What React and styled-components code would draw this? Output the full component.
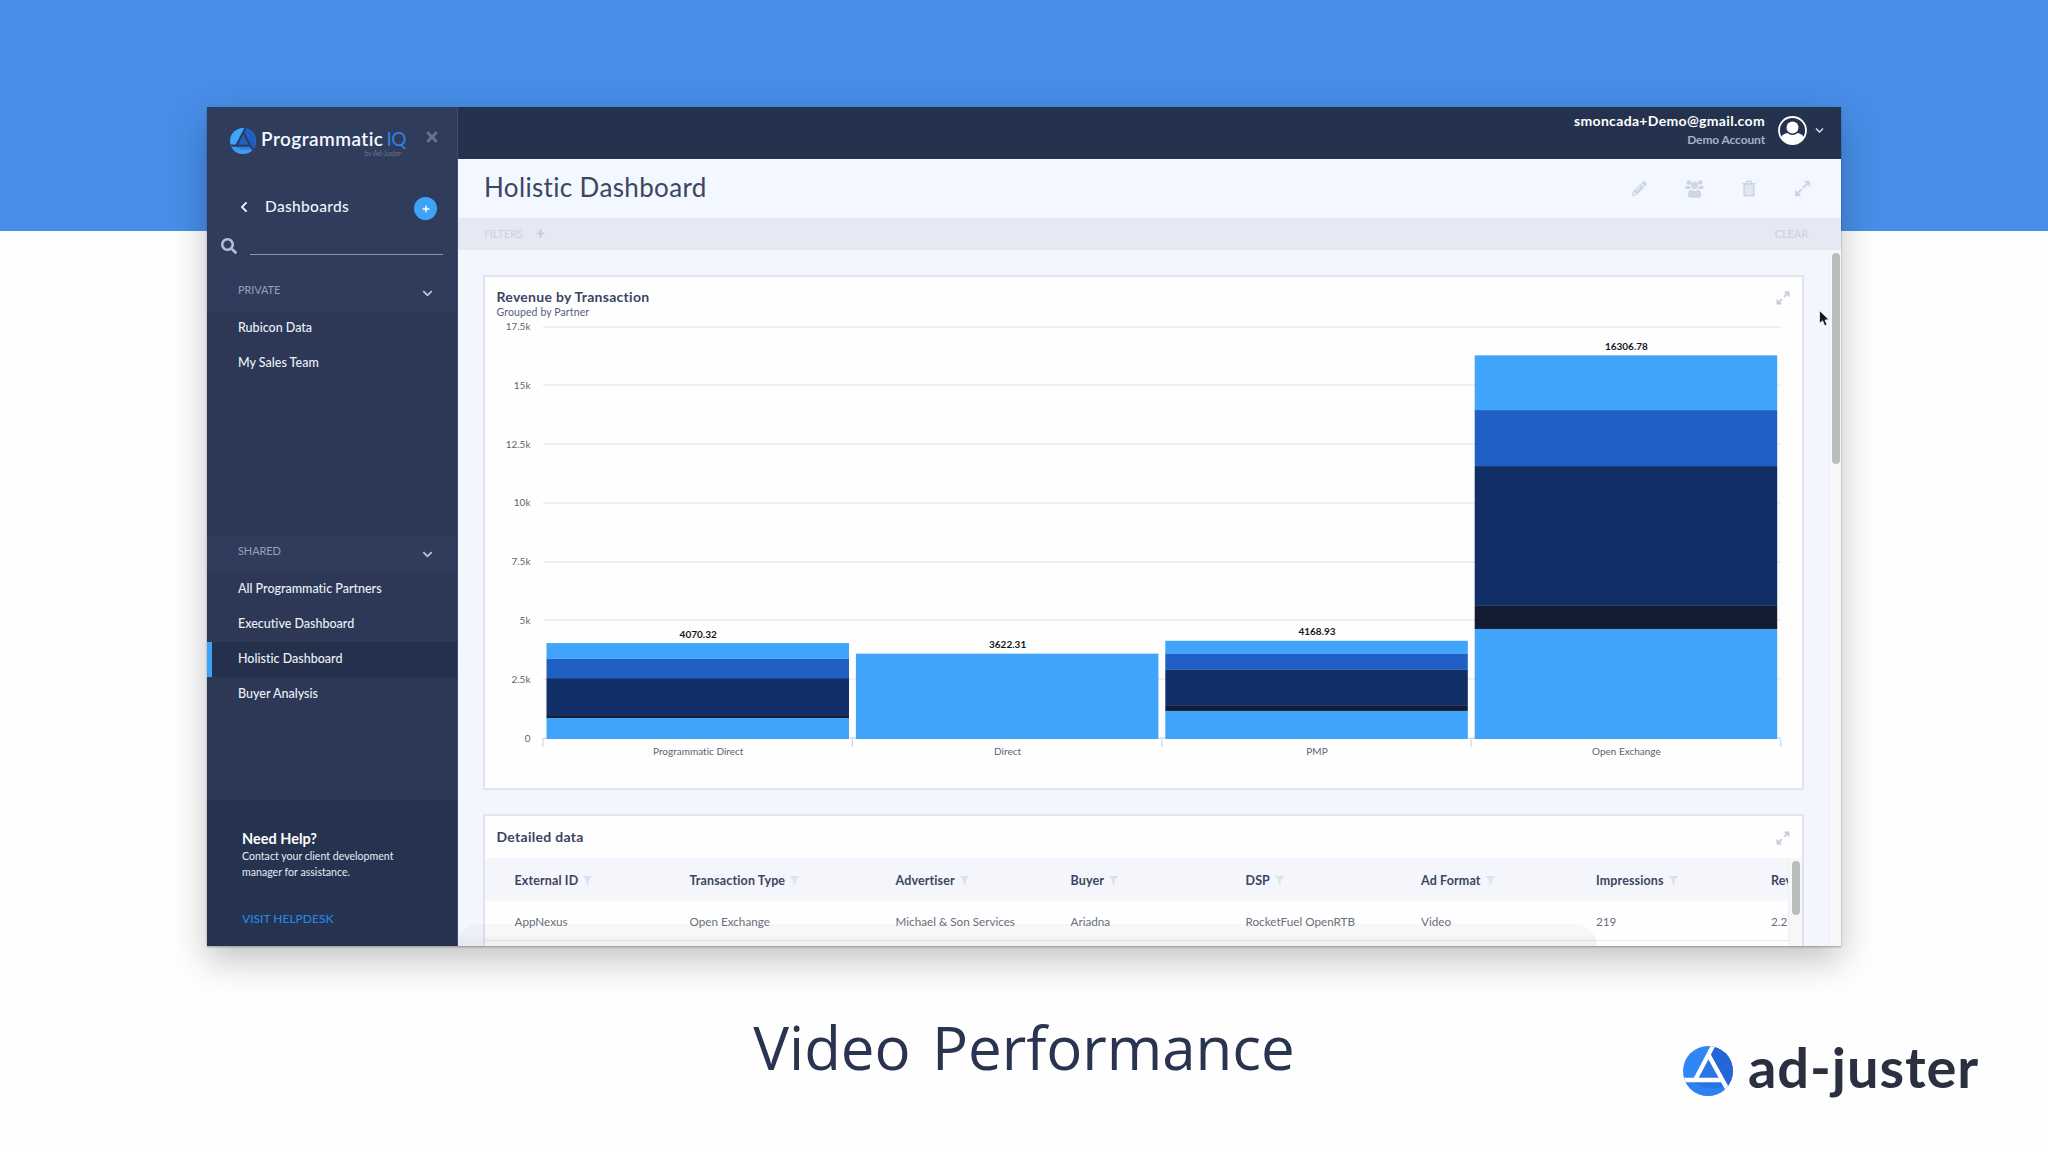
import React from 'react';
import styled, { createGlobalStyle } from 'styled-components';
import {
  FaTimes, FaChevronLeft, FaChevronDown, FaPlus, FaSearch, FaPencilAlt, FaFilter,
} from 'react-icons/fa';

const GlobalStyle = createGlobalStyle`
  * { box-sizing: border-box; }
  body { margin: 0; font-family: Lato, "Liberation Sans", sans-serif; font-variant-ligatures: none; }
  svg { display: block; flex: none; }
`;

/* ---------- page ---------- */

const Page = styled.div`
  display: flex;
  flex-direction: column;
  align-items: center;
  width: 2048px;
  height: 1152px;
  padding-top: 107px;
  overflow: hidden;
  background: linear-gradient(#478ee8 231px, #fefefe 231px);
`;

const Window = styled.div`
  position: relative;
  display: flex;
  width: 1634px;
  height: 839px;
  flex: none;
  background: #f4f6fe;
  box-shadow: 0 14px 34px rgba(0, 0, 0, 0.24), 0 1px 2px rgba(0, 0, 0, 0.3);
`;

const Footer = styled.footer`
  display: grid;
  grid-template-columns: 1fr auto 1fr;
  width: 100%;
  height: 206px;
  padding: 61px 69px 0;
`;

const Caption = styled.h1`
  grid-column: 2;
  margin: 0;
  font: 400 60px/80px "Open Sans", sans-serif;
  letter-spacing: -0.05px;
  word-spacing: 6px;
  color: #283450;
`;

const Company = styled.div`
  justify-self: end;
  display: flex;
  align-items: center;
  gap: 15px;
  height: 68px;
  margin-top: 30px;
`;

const CompanyName = styled.span`
  margin-top: -9px;
  font-size: 56px;
  font-weight: 700;
  line-height: 60px;
  letter-spacing: 0.9px;
  color: #2a3040;
`;

/* ---------- sidebar ---------- */

const Sidebar = styled.aside`
  display: flex;
  flex-direction: column;
  width: 251px;
  flex: none;
  background: #2f3c5b;
  border-right: 1px solid #46486f;
`;

const Brand = styled.div`
  display: flex;
  align-items: flex-start;
  height: 82px;
  padding: 21px 17px 0 23px;
`;

const BrandText = styled.div`
  display: flex;
  flex-direction: column;
  align-items: flex-end;
  margin: 0 0 0 5px;
`;

const BrandName = styled.div`
  display: flex;
  gap: 3px;
  font-size: 19px;
  font-weight: 600;
  line-height: 22px;
  letter-spacing: 0.45px;
  color: #f4f8ff;
`;

const BrandAccent = styled.span`
  letter-spacing: -0.4px;
  font-weight: 400;
  color: #2f83e0;
`;

const Byline = styled.div`
  margin: -1px 5px 0 0;
  font-size: 7px;
  line-height: 8px;
  letter-spacing: -0.13px;
  color: #66728d;
`;

const CloseButton = styled.div`
  margin: 1px 0 0 auto;
  color: #67738d;
`;

const MenuHeader = styled.div`
  display: flex;
  align-items: center;
  height: 36px;
  padding: 0 20px 0 31px;
  color: #eef3fc;
`;

const MenuTitle = styled.span`
  flex: 1;
  margin: -3px 0 0 15px;
  font-size: 15.5px;
  font-weight: 500;
  letter-spacing: 0.31px;
`;

const AddButton = styled.div`
  display: grid;
  place-items: center;
  width: 23px;
  height: 23px;
  margin-top: 3px;
  border-radius: 50%;
  background: #3ea2f8;
  color: #fff;
`;

const SearchRow = styled.div`
  display: flex;
  align-items: flex-start;
  height: 51px;
  padding: 13px 14px 0 14px;
  color: #b3bfd0;
`;

const SearchField = styled.div`
  flex: 1;
  height: 17px;
  margin-left: 13px;
  border-bottom: 1px solid #8496b0;
`;

const GroupHeader = styled.div`
  display: flex;
  align-items: center;
  justify-content: space-between;
  height: 35px;
  padding: 0 24px 0 31px;
  background: #2f3c5b;
  color: #b7c3d5;
`;

const GroupName = styled.span`
  margin-bottom: 8px;
  font-size: 11px;
  letter-spacing: -0.1px;
  color: #94a0b8;
`;

const GroupList = styled.div`
  height: ${(p) => p.$height}px;
  background: #2c3855;
`;

const NavItem = styled.div`
  height: 35px;
  padding: 0 0 0 ${(p) => (p.$active ? 26 : 31)}px;
  border-left: ${(p) => (p.$active ? '5px solid #3ea2f8' : '0')};
  background: ${(p) => (p.$active ? '#25304c' : 'transparent')};
  font-size: 12.5px;
  font-weight: 500;
  line-height: 33px;
  color: #eaf0fa;
`;

const Help = styled.div`
  display: flex;
  flex-direction: column;
  flex: 1;
  padding: 29px 20px 0 35px;
  background: #25334f;
  color: #e6ecf6;
`;

const HelpTitle = styled.div`
  font-size: 14.5px;
  font-weight: 700;
  line-height: 20px;
  color: #fff;
`;

const HelpText = styled.div`
  font-size: 10.6px;
  line-height: 15.5px;
`;

const HelpLink = styled.div`
  margin-top: 30px;
  font-size: 12px;
  font-weight: 500;
  line-height: 18px;
  color: #2a84e6;
`;

/* ---------- header ---------- */

const Main = styled.main`
  display: flex;
  flex-direction: column;
  flex: 1;
  min-width: 0;
`;

const TopBar = styled.header`
  display: flex;
  align-items: flex-start;
  justify-content: flex-end;
  height: 52px;
  flex: none;
  padding: 5px 17px 0 0;
  background: #24324e;
  color: #fff;
`;

const Account = styled.div`
  display: flex;
  flex-direction: column;
  align-items: flex-end;
  margin-right: 13px;
`;

const Email = styled.span`
  font-size: 14px;
  font-weight: 700;
  line-height: 18px;
  letter-spacing: 0.33px;
`;

const AccountName = styled.span`
  margin-top: 1px;
  font-size: 12px;
  font-weight: 700;
  line-height: 18px;
  letter-spacing: -0.12px;
  color: #a4b0c5;
`;

const Avatar = styled.div`
  margin: 4px 8px 0 0;
`;

const Caret = styled.div`
  margin-top: 14px;
`;

const TitleBar = styled.div`
  display: flex;
  align-items: center;
  justify-content: space-between;
  height: 59px;
  flex: none;
  padding: 0 30px 0 26px;
  background: #f3f7ff;
`;

const Title = styled.h2`
  margin: -3px 0 0;
  font-size: 26px;
  font-weight: 400;
  letter-spacing: 0.35px;
  color: #3c4562;
`;

const Actions = styled.div`
  display: flex;
  align-items: center;
  gap: 38px;
  color: #d0d5e5;
`;

const FilterBar = styled.div`
  display: flex;
  align-items: center;
  height: 32px;
  flex: none;
  padding: 0 33px 2px 26px;
  background: #e6e8f4;
  font-size: 11px;
  letter-spacing: -0.1px;
  color: #cdd1df;
`;

const FilterAdd = styled.div`
  flex: 1;
  margin-left: 13px;
  color: #c3c8d9;
`;

/* ---------- content ---------- */

const Scroller = styled.div`
  display: flex;
  flex: 1;
  min-height: 0;
  overflow: hidden;
`;

const Cards = styled.div`
  display: flex;
  flex-direction: column;
  gap: 24px;
  flex: 1;
  min-width: 0;
  padding: 25px 25px 0 25px;
`;

const Track = styled.div`
  width: ${(p) => p.$width}px;
  flex: none;
  padding: 3px ${(p) => (p.$width - 9) / 2}px;
  background: #f7f7f9;
  border-left: 1px solid #eeeff4;
`;

const Thumb = styled.div`
  height: ${(p) => p.$length}px;
  border-radius: 5px;
  background: #bbbcbd;
`;

const Card = styled.section`
  display: flex;
  flex-direction: column;
  height: ${(p) => p.$height}px;
  flex: none;
  border: 2px solid #e1e3ee;
  background: #fefefe;
`;

const CardHead = styled.div`
  display: flex;
  justify-content: space-between;
  align-items: flex-start;
  height: ${(p) => p.$height}px;
  flex: none;
  padding: ${(p) => p.$top}px 12px 0 11.5px;
  color: #c6cad6;
`;

const CardTitle = styled.div`
  font-size: 14px;
  font-weight: 700;
  line-height: 20px;
  letter-spacing: 0.28px;
  color: #3a4462;
`;

const CardSubtitle = styled.div`
  margin-top: -1.5px;
  font-size: 10.5px;
  line-height: 12px;
  letter-spacing: 0.11px;
  color: #555e78;
`;

const CardAction = styled.div`
  margin-top: 4px;
`;

const TableArea = styled.div`
  display: flex;
  flex: 1;
  min-height: 0;
`;

const Table = styled.div`
  flex: 1;
  min-width: 0;
  overflow: hidden;
`;

const Row = styled.div`
  display: grid;
  grid-template-columns: 175px 206px 175px 175px 175.5px 175px 175px 175px;
  align-items: center;
  width: 1500px;
  height: ${(p) => (p.$head ? 43 : 40)}px;
  padding: 1px 0 0 29.5px;
  background: ${(p) => (p.$head ? '#f5f6fc' : '#fefefe')};
  border-bottom: ${(p) => (p.$head ? '0' : '1px solid #e6e6ea')};
  font-size: ${(p) => (p.$head ? 12.5 : 11.7)}px;
  font-weight: ${(p) => (p.$head ? 700 : 400)};
  letter-spacing: ${(p) => (p.$head ? 0.13 : 0)}px;
  color: ${(p) => (p.$head ? '#3c4562' : '#686e7c')};
`;

const HeadCell = styled.div`
  display: flex;
  align-items: center;
  gap: 5px;
  white-space: nowrap;
  svg { color: #dfe2ee; }
`;

const StatusPill = styled.div`
  position: absolute;
  left: 251px;
  bottom: 0;
  width: 1139px;
  height: 22px;
  border-radius: 24px 26px 0 0;
  background: linear-gradient(rgba(90, 100, 110, 0.045) 12px, rgba(90, 100, 110, 0.08) 14px);
`;

const Pointer = styled.div`
  position: absolute;
  left: 1611px;
  top: 202px;
`;

/* ---------- drawings ---------- */

const Mark = ({ size, line, left, right, bottom, inner, id }) => (
  <svg width={size} height={size} viewBox="0 0 150 150">
    <defs>
      <clipPath id={id}><circle cx="75" cy="75" r="75" /></clipPath>
    </defs>
    <g clipPath={`url(#${id})`}>
      <rect width="150" height="150" fill={left} />
      <path d="M88 0 L150 0 L150 150 L77 25Z" fill={right} />
      <path d="M0 101 H118 L140 150 H0Z" fill={bottom} />
      <path d="M20 101 H118 L128 120 Q70 140 20 101Z" fill={right} opacity="0.45" />
      <path d="M77 32 L40 101 H118Z" fill={inner} />
      <g stroke={line} strokeWidth="13" fill="none">
        <path d="M94 -8 L36 103" />
        <path d="M-2 102 H118" />
        <path d="M76 26 L137 136" />
      </g>
    </g>
  </svg>
);

const ExpandIcon = () => (
  <svg width="17" height="17" viewBox="0 0 16 16" fill="currentColor">
    <path d="M3.5 12.5 L12.5 3.5" stroke="currentColor" strokeWidth="1.8" strokeDasharray="5.4 1.6" />
    <path d="M9.4 0.8 H15.2 V6.6 L13.3 5 L11 2.7Z" />
    <path d="M0.8 9.6 L2.5 10.2 L5.8 13.5 L6.4 15.2 H0.8Z" />
  </svg>
);

const EnlargeIcon = () => (
  <svg width="14" height="14" viewBox="0 0 16 16" fill="none" stroke="currentColor" strokeWidth="1.9">
    <path d="M2.5 13.5 L6.8 9.2 M9.2 6.8 L13.5 2.5" />
    <path d="M9.8 1.6 H14.4 V6.2 M1.6 9.8 V14.4 H6.2" />
  </svg>
);

const GroupIcon = () => (
  <svg width="19" height="18" viewBox="0 0 19 18" fill="currentColor">
    <circle cx="3.9" cy="2.6" r="2.4" />
    <circle cx="15.1" cy="2.6" r="2.4" />
    <circle cx="9.5" cy="5.4" r="3.6" />
    <path d="M0.3 8.6 C0.3 6.6 1 5.4 2.2 5.4 C3.4 6 4.4 6 5.1 5.7 C5.1 7.3 5.6 8.2 6.3 9 H1.2 C0.6 9 0.3 8.9 0.3 8.6Z" />
    <path d="M18.7 8.6 C18.7 6.6 18 5.4 16.8 5.4 C15.6 6 14.6 6 13.9 5.7 C13.9 7.3 13.4 8.2 12.7 9 H17.8 C18.4 9 18.7 8.9 18.7 8.6Z" />
    <path d="M2.8 15.3 C2.8 12 3.8 9.7 6.1 9.7 C8 11.1 11 11.1 12.9 9.7 C15.2 9.7 16.2 12 16.2 15.3 C16.2 16.9 15.2 17.7 13.7 17.7 H5.3 C3.8 17.7 2.8 16.9 2.8 15.3Z" />
  </svg>
);

const TrashIcon = () => (
  <svg width="14" height="17" viewBox="0 0 14 17" fill="none" stroke="currentColor" strokeWidth="1.6">
    <path d="M2.2 4 V15.6 H11.8 V4Z" fill="#e2e6f1" />
    <path d="M0.3 3.8 H13.7 M4.3 3.5 L5.2 1.2 H8.8 L9.7 3.5" />
  </svg>
);

const UserIcon = () => (
  <svg width="29" height="29" viewBox="0 0 29 29">
    <defs>
      <clipPath id="avatar"><circle cx="14.5" cy="14.5" r="13.2" /></clipPath>
    </defs>
    <circle cx="14.5" cy="14.5" r="13.5" fill="none" stroke="#fff" strokeWidth="1.8" />
    <path clipPath="url(#avatar)" d="M3 29 V22 C4 18.5 7 17.5 9.5 17 C12 19.6 17 19.6 19.5 17 C22 17.5 25 18.5 26 22 V29Z" fill="#fff" />
    <circle cx="14.5" cy="11.5" r="6" fill="#fff" />
  </svg>
);

const PointerIcon = () => (
  <svg width="14" height="20" viewBox="0 0 14 20">
    <path d="M1.5 1.5 V14.5 L4.6 11.8 L6.7 16.8 L9 15.8 L7 11 L11 10.8Z" fill="#15161e" stroke="#e9e9f2" strokeWidth="0.9" />
  </svg>
);

/* ---------- chart ---------- */

const ChartSvg = styled.svg`
  font-family: Lato, sans-serif;
  font-size: 10px;
`;

const COLORS = ['#3fa4fa', '#131c33', '#122e66', '#205fc4', '#3fa4fa'];
const DATA = [
  { name: 'Programmatic Direct', total: '4070.32', parts: [893, 115, 1574, 830, 658] },
  { name: 'Direct', total: '3622.31', parts: [3622] },
  { name: 'PMP', total: '4168.93', parts: [1195, 213, 1544, 680, 537] },
  { name: 'Open Exchange', total: '16306.78', parts: [4680, 1000, 5920, 2382, 2325] },
];
const TICKS = ['0', '2.5k', '5k', '7.5k', '10k', '12.5k', '15k', '17.5k'];
const LEFT = 58;
const BAND = 309.4;
const BASE = 421;
const UNIT = 411.5 / 17500;
const BAR_BASE = BASE + 0.8;

const Chart = () => (
  <ChartSvg width="1317" height="471" viewBox="0 0 1317 471">
    {TICKS.map((t, i) => {
      const y = BASE - i * 2500 * UNIT;
      return (
        <g key={t}>
          <path d={`M${LEFT} ${Math.round(y)}H${LEFT + BAND * 4}`} stroke={i ? '#ebebef' : '#d5daee'} strokeWidth="1.5" />
          <text x="45.5" y={y + 3.5} textAnchor="end" fill="#5f636e">{t}</text>
        </g>
      );
    })}
    {[0, 1, 2, 3, 4].map((i) => (
      <path key={i} d={`M${LEFT + i * BAND} ${BASE}v9`} stroke="#d5daee" strokeWidth="1.3" />
    ))}
    {DATA.map((d, i) => {
      const x = LEFT + i * BAND + 3.5;
      const mid = LEFT + (i + 0.5) * BAND + 0.5;
      let sum = 0;
      const rects = d.parts.map((p, k) => {
        sum += p;
        return <rect key={k} x={x} y={BAR_BASE - sum * UNIT} width="302.5" height={p * UNIT + 0.2} fill={COLORS[k]} />;
      });
      return (
        <g key={d.name}>
          {rects}
          <text x={mid} y={BAR_BASE - sum * UNIT - 5.5} textAnchor="middle" fontWeight="700" fill="#14151c">{d.total}</text>
          <text x={mid} y={BASE + 17} textAnchor="middle" fill="#5f636e">{d.name}</text>
        </g>
      );
    })}
  </ChartSvg>
);

/* ---------- data ---------- */

const PRIVATE = ['Rubicon Data', 'My Sales Team'];
const SHARED = ['All Programmatic Partners', 'Executive Dashboard', 'Holistic Dashboard', 'Buyer Analysis'];
const COLUMNS = ['External ID', 'Transaction Type', 'Advertiser', 'Buyer', 'DSP', 'Ad Format', 'Impressions', 'Rev'];
const RECORD = ['AppNexus', 'Open Exchange', 'Michael & Son Services', 'Ariadna', 'RocketFuel OpenRTB', 'Video', '219', '2.2'];

const NavGroup = ({ name, items, height, active }) => (
  <>
    <GroupHeader>
      <GroupName>{name}</GroupName>
      <FaChevronDown size={11} />
    </GroupHeader>
    <GroupList $height={height}>
      {items.map((item) => <NavItem key={item} $active={item === active}>{item}</NavItem>)}
    </GroupList>
  </>
);

export default function App() {
  return (
    <Page>
      <GlobalStyle />
      <Window>
        <Sidebar>
          <Brand>
            <Mark id="brand" size={26} line="#2c3f66" left="#3fa4fa" right="#1f5fc4" bottom="#3c9cf4" inner="#2260b8" />
            <BrandText>
              <BrandName>Programmatic<BrandAccent>IQ</BrandAccent></BrandName>
              <Byline>by Ad-Juster</Byline>
            </BrandText>
            <CloseButton><FaTimes size={16} /></CloseButton>
          </Brand>
          <MenuHeader>
            <FaChevronLeft size={12} />
            <MenuTitle>Dashboards</MenuTitle>
            <AddButton><FaPlus size={8} /></AddButton>
          </MenuHeader>
          <SearchRow>
            <FaSearch size={16} />
            <SearchField />
          </SearchRow>
          <NavGroup name="PRIVATE" items={PRIVATE} height={226} />
          <NavGroup name="SHARED" items={SHARED} height={228} active="Holistic Dashboard" />
          <Help>
            <HelpTitle>Need Help?</HelpTitle>
            <HelpText>Contact your client development<br />manager for assistance.</HelpText>
            <HelpLink>VISIT HELPDESK</HelpLink>
          </Help>
        </Sidebar>
        <Main>
          <TopBar>
            <Account>
              <Email>smoncada+Demo@gmail.com</Email>
              <AccountName>Demo Account</AccountName>
            </Account>
            <Avatar><UserIcon /></Avatar>
            <Caret>
              <svg width="9" height="9" viewBox="0 0 9 9" fill="none" stroke="#dfe5ef" strokeWidth="1.4"><path d="M1 2.5 L4.5 6 L8 2.5" /></svg>
            </Caret>
          </TopBar>
          <TitleBar>
            <Title>Holistic Dashboard</Title>
            <Actions>
              <FaPencilAlt size={15} />
              <GroupIcon />
              <TrashIcon />
              <ExpandIcon />
            </Actions>
          </TitleBar>
          <FilterBar>
            FILTERS
            <FilterAdd><FaPlus size={9} /></FilterAdd>
            CLEAR
          </FilterBar>
          <Scroller>
            <Cards>
              <Card $height={515}>
                <CardHead $height={40} $top={10}>
                  <div>
                    <CardTitle>Revenue by Transaction</CardTitle>
                    <CardSubtitle>Grouped by Partner</CardSubtitle>
                  </div>
                  <CardAction><EnlargeIcon /></CardAction>
                </CardHead>
                <Chart />
              </Card>
              <Card $height={180}>
                <CardHead $height={42} $top={11}>
                  <CardTitle>Detailed data</CardTitle>
                  <CardAction><EnlargeIcon /></CardAction>
                </CardHead>
                <TableArea>
                  <Table>
                    <Row $head>
                      {COLUMNS.map((c, i) => (
                        <HeadCell key={c}>{c}{i < COLUMNS.length - 1 && <FaFilter size={9} />}</HeadCell>
                      ))}
                    </Row>
                    <Row>
                      {RECORD.map((c) => <div key={c}>{c}</div>)}
                    </Row>
                  </Table>
                  <Track $width={14}><Thumb $length={54} /></Track>
                </TableArea>
              </Card>
            </Cards>
            <Track $width={12}><Thumb $length={211} /></Track>
          </Scroller>
        </Main>
        <StatusPill />
        <Pointer><PointerIcon /></Pointer>
      </Window>
      <Footer>
        <Caption>Video Performance</Caption>
        <Company>
          <Mark id="company" size={50} line="#fff" left="#2f86f5" right="#2465d8" bottom="#2f80f0" inner="#2b76e6" />
          <CompanyName>ad-juster</CompanyName>
        </Company>
      </Footer>
    </Page>
  );
}
